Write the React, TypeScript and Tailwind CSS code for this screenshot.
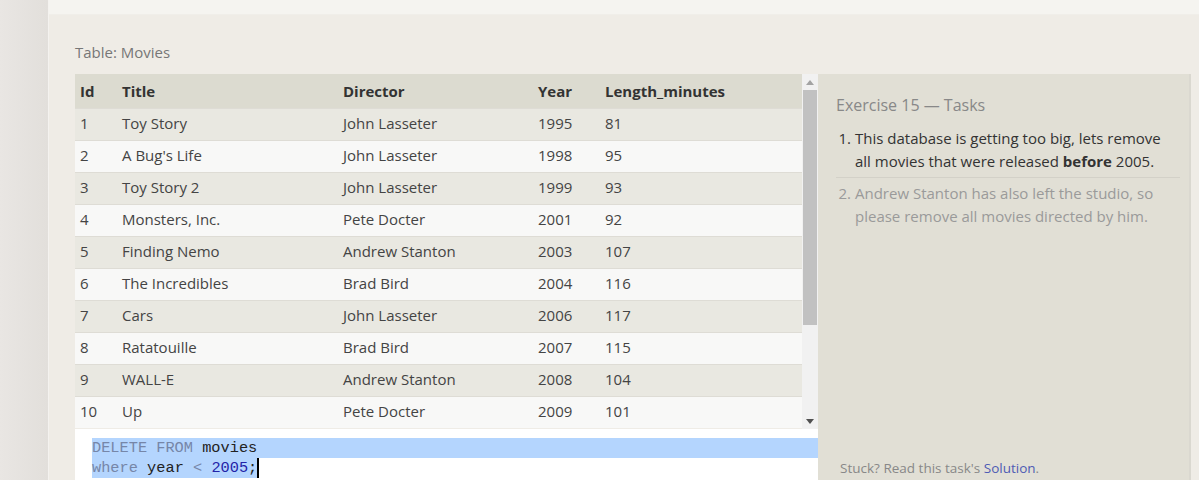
const movies = [
  [1, "Toy Story", "John Lasseter", 1995, 81],
  [2, "A Bug's Life", "John Lasseter", 1998, 95],
  [3, "Toy Story 2", "John Lasseter", 1999, 93],
  [4, "Monsters, Inc.", "Pete Docter", 2001, 92],
  [5, "Finding Nemo", "Andrew Stanton", 2003, 107],
  [6, "The Incredibles", "Brad Bird", 2004, 116],
  [7, "Cars", "John Lasseter", 2006, 117],
  [8, "Ratatouille", "Brad Bird", 2007, 115],
  [9, "WALL-E", "Andrew Stanton", 2008, 104],
  [10, "Up", "Pete Docter", 2009, 101],
];

const sans = { fontFamily: '"Open Sans", "Noto Sans", sans-serif' };

export default function App() {
  return (
    <div className="flex h-[480px] w-[1199px] overflow-hidden text-[15px]" style={sans}>
      <div className="w-[49px] shrink-0 bg-gradient-to-r from-[#e9e6e3] to-[#e2dfdb] border-r border-[#f4f2ef]" />
      <div className="flex flex-1 flex-col">
        <div className="h-[15px] shrink-0 bg-[#f5f4f0] border-b border-[#f0eee9]" />
        <div className="flex-1 bg-[#efece6] pl-[26px] pr-[7px]">
          <div className="pt-[27px] pb-[12px] text-[#777] leading-[20px]">Table: Movies</div>
          <div className="flex">
            <div className="w-[743px] shrink-0">
              <div className="flex h-[355px]">
                <div className="w-[727px] shrink-0">
                  <div className="flex h-[34px] items-center bg-[#dcdbd0] font-bold text-[#333]">
                    <div className="w-[47px] pl-[5px]">Id</div>
                    <div className="w-[221px]">Title</div>
                    <div className="w-[195px]">Director</div>
                    <div className="w-[67px]">Year</div>
                    <div className="flex-1">Length_minutes</div>
                  </div>
                  {movies.map((m, i) => (
                    <div
                      key={i}
                      className={`flex h-[32px] items-center border-t border-[#dedcd5] pb-[3px] text-[#444] ${
                        i % 2 === 0 ? "bg-[#e9e8e1]" : "bg-[#f8f8f7]"
                      }`}
                    >
                      <div className="w-[47px] pl-[5px]">{m[0]}</div>
                      <div className="w-[221px]">{m[1]}</div>
                      <div className="w-[195px]">{m[2]}</div>
                      <div className="w-[67px]">{m[3]}</div>
                      <div className="flex-1">{m[4]}</div>
                    </div>
                  ))}
                </div>
                <div className="flex w-[16px] shrink-0 flex-col bg-[#f1f1f1]">
                  <div className="flex h-[16px] items-center justify-center">
                    <svg width="8" height="5" viewBox="0 0 8 5"><path d="M4 0L8 5H0z" fill="#a3a3a3" /></svg>
                  </div>
                  <div className="mx-[1px] h-[235px] bg-[#c1c1c1]" />
                  <div className="flex-1" />
                  <div className="flex h-[16px] items-center justify-center">
                    <svg width="8" height="5" viewBox="0 0 8 5"><path d="M0 0H8L4 5z" fill="#505050" /></svg>
                  </div>
                </div>
              </div>
              <div
                className="h-[60px] bg-white pt-[9px] text-[15.3px] leading-[20px]"
                style={{ fontFamily: '"Liberation Mono", "DejaVu Sans Mono", monospace' }}
              >
                <div className="ml-[17px] bg-[#b4d5fe]">
                  <span className="text-[#7686a8]">DELETE FROM</span> <span className="text-[#222]">movies</span>
                </div>
                <div className="ml-[17px] flex">
                  <span className="bg-[#b4d5fe]">
                    <span className="text-[#7686a8]">where</span> <span className="text-[#222]">year</span>{" "}
                    <span className="text-[#7686a8]">&lt;</span> <span className="text-[#2323a8]">2005</span>
                    <span className="text-[#222]">;</span>
                  </span>
                  <span className="h-[20px] w-[2px] bg-black" />
                </div>
              </div>
            </div>
            <div className="flex h-[420px] w-[373px] shrink-0 flex-col justify-between border-r-2 border-[#dad8d0] bg-[#e1dfd5] pl-[18px] pr-[9px] pt-[19px]">
              <div>
                <div className="text-[16px] leading-[24px] text-[#888]">Exercise 15 — Tasks</div>
                <ol className="mt-[10px] text-[15px] leading-[23px]">
                  <li className="flex border-b border-[#d3d1c8] pb-[4px] text-[#333]">
                    <span className="w-[19px] shrink-0 text-right pr-[4px]">1.</span>
                    <span>
                      This database is getting too big, lets remove all movies that were released{" "}
                      <b>before</b> 2005.
                    </span>
                  </li>
                  <li className="flex pt-[4px] text-[#9a9a9a]">
                    <span className="w-[19px] shrink-0 text-right pr-[4px]">2.</span>
                    <span>Andrew Stanton has also left the studio, so please remove all movies directed by him.</span>
                  </li>
                </ol>
              </div>
              <div className="pb-[16px] pl-[4px] text-[13.5px] text-[#888]">
                Stuck? Read this task's <span className="text-[#4e5bb4]">Solution</span>.
              </div>
            </div>
          </div>
        </div>
      </div>
    </div>
  );
}
